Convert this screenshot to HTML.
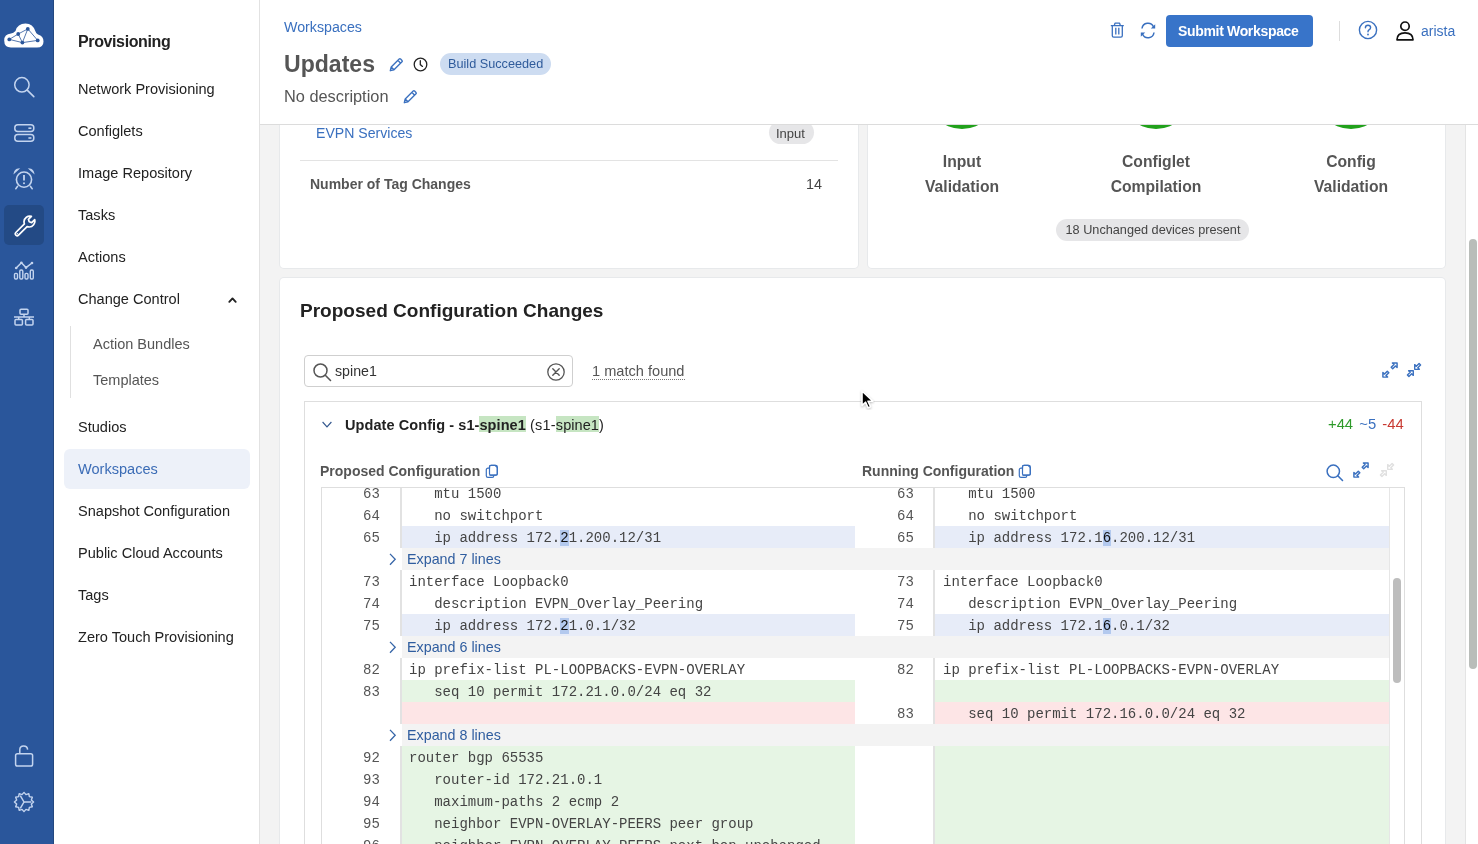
<!DOCTYPE html><html><head><meta charset="utf-8"><title>Workspaces - Updates</title><style>
*{margin:0;padding:0;box-sizing:content-box}
html,body{width:1478px;height:844px;overflow:hidden;background:#f3f3f3;font-family:'Liberation Sans', sans-serif}
.t{position:absolute;white-space:nowrap;will-change:transform}
.r{position:absolute;display:block}
.hl{background:linear-gradient(#c6e5c2,#c6e5c2) 0 0/100% calc(100% - 1px) no-repeat;padding-top:1px}
</style></head><body><div class="r" style="left:0px;top:0px;width:1478px;height:844px;background:#f3f3f3;"></div>
<div class="r" style="left:280px;top:40px;width:578px;height:228px;background:#fff;border-radius:4px;box-shadow:0 0 0 1px rgba(20,50,90,0.05);"></div>
<div class="r" style="left:868px;top:40px;width:577px;height:228px;background:#fff;border-radius:4px;box-shadow:0 0 0 1px rgba(20,50,90,0.05);"></div>
<div class="r" style="left:280px;top:278px;width:1165px;height:700px;background:#fff;border-radius:4px;box-shadow:0 0 0 1px rgba(20,50,90,0.05);"></div>
<div class="t" style="left:316.00px;top:126.46px;font-size:14.1px;line-height:14.1px;color:#3a70bf;font-weight:400;font-family:'Liberation Sans', sans-serif;">EVPN Services</div>
<div class="r" style="left:769px;top:121px;width:45px;height:23px;background:#e6e6e8;border-radius:12px;"></div>
<div class="t" style="left:776.00px;top:126.50px;font-size:13px;line-height:13px;color:#444;font-weight:400;font-family:'Liberation Sans', sans-serif;">Input</div>
<div class="r" style="left:300px;top:160px;width:538px;height:1px;background:#e3e3e3;"></div>
<div class="t" style="left:310.00px;top:176.85px;font-size:14px;line-height:14px;color:#555;font-weight:700;font-family:'Liberation Sans', sans-serif;">Number of Tag Changes</div>
<div class="t" style="right:655.50px;top:176.81px;font-size:14.4px;line-height:14.4px;color:#444;font-weight:400;font-family:'Liberation Sans', sans-serif;">14</div>
<div class="r" style="left:926px;top:57px;width:72px;height:72px;border-radius:50%;background:#21a11b;"></div>
<div class="r" style="left:1120px;top:57px;width:72px;height:72px;border-radius:50%;background:#21a11b;"></div>
<div class="r" style="left:1315px;top:57px;width:72px;height:72px;border-radius:50%;background:#21a11b;"></div>
<div class="t" style="left:662.00px;width:600px;text-align:center;top:153.71px;font-size:15.7px;line-height:15.7px;color:#555;font-weight:700;font-family:'Liberation Sans', sans-serif;">Input</div>
<div class="t" style="left:662.00px;width:600px;text-align:center;top:178.71px;font-size:15.7px;line-height:15.7px;color:#555;font-weight:700;font-family:'Liberation Sans', sans-serif;">Validation</div>
<div class="t" style="left:856.00px;width:600px;text-align:center;top:153.71px;font-size:15.7px;line-height:15.7px;color:#555;font-weight:700;font-family:'Liberation Sans', sans-serif;">Configlet</div>
<div class="t" style="left:856.00px;width:600px;text-align:center;top:178.71px;font-size:15.7px;line-height:15.7px;color:#555;font-weight:700;font-family:'Liberation Sans', sans-serif;">Compilation</div>
<div class="t" style="left:1051.00px;width:600px;text-align:center;top:153.71px;font-size:15.7px;line-height:15.7px;color:#555;font-weight:700;font-family:'Liberation Sans', sans-serif;">Config</div>
<div class="t" style="left:1051.00px;width:600px;text-align:center;top:178.71px;font-size:15.7px;line-height:15.7px;color:#555;font-weight:700;font-family:'Liberation Sans', sans-serif;">Validation</div>
<div class="r" style="left:1056px;top:219px;width:193px;height:22px;background:#e6e6e8;border-radius:11px;"></div>
<div class="t" style="left:852.50px;width:600px;text-align:center;top:223.75px;font-size:12.7px;line-height:12.7px;color:#444;font-weight:400;font-family:'Liberation Sans', sans-serif;">18 Unchanged devices present</div>
<div class="t" style="left:300.00px;top:301.07px;font-size:19.05px;line-height:19.05px;color:#222;font-weight:700;font-family:'Liberation Sans', sans-serif;">Proposed Configuration Changes</div>
<div class="r" style="left:304px;top:355px;width:267px;height:30px;background:#fff;border:1px solid #cfcfcf;border-radius:4px;"></div>
<svg class="r" style="left:312px;top:362px;" width="20" height="20" viewBox="0 0 20 20"><circle cx="8.5" cy="8.5" r="6.5" fill="none" stroke="#555" stroke-width="1.5"/><line x1="13.3" y1="13.3" x2="18.5" y2="18.5" stroke="#555" stroke-width="1.6" stroke-linecap="round"/></svg>
<div class="t" style="left:334.50px;top:363.98px;font-size:14.2px;line-height:14.2px;color:#333;font-weight:400;font-family:'Liberation Sans', sans-serif;">spine1</div>
<svg class="r" style="left:546px;top:362px;" width="20" height="20" viewBox="0 0 20 20"><circle cx="10" cy="10" r="8.2" fill="none" stroke="#555" stroke-width="1.3"/><path d="M6.8 6.8 L13.2 13.2 M13.2 6.8 L6.8 13.2" stroke="#555" stroke-width="1.4" stroke-linecap="round"/></svg>
<div class="t" style="left:592.00px;top:363.64px;font-size:14.6px;line-height:14.6px;color:#555;font-weight:400;font-family:'Liberation Sans', sans-serif;">1 match found</div>
<div class="r" style="left:592px;top:379px;width:93px;height:0;border-top:1px dotted #777;"></div>
<svg class="r" style="left:1382px;top:362px;" width="16" height="16" viewBox="0 0 16 16"><path d="M10.4 0.9 H15.1 V5.6 L13.5 4 L10.7 6.8 L9.2 5.3 L12 2.5 Z M5.6 15.1 H0.9 V10.4 L2.5 12 L5.3 9.2 L6.8 10.7 L4 13.5 Z" fill="none" stroke="#3a70bf" stroke-width="1.45" stroke-linejoin="round"/></svg>
<svg class="r" style="left:1406px;top:362px;" width="16" height="16" viewBox="0 0 16 16"><path d="M8.7 2.6 V7.3 H13.4 L11.8 5.7 L14.6 2.9 L13.1 1.4 L10.3 4.2 Z M7.3 13.4 V8.7 H2.6 L4.2 10.3 L1.4 13.1 L2.9 14.6 L5.7 11.8 Z" fill="none" stroke="#3a70bf" stroke-width="1.35" stroke-linejoin="round"/></svg>
<div class="r" style="left:304px;top:401px;width:1116px;height:600px;background:#fff;border:1px solid #dedede;"></div>
<svg class="r" style="left:321px;top:420px;" width="12" height="10" viewBox="0 0 12 10"><path d="M1.6 2 L6 6.8 L10.4 2" fill="none" stroke="#34588f" stroke-width="1.15"/></svg>
<div class="t" style="left:344.5px;top:417.93px;font-size:14.5px;line-height:14.5px;color:#222;font-family:'Liberation Sans', sans-serif;white-space:pre;"><b style="letter-spacing:0.08px">Update Config - s1-<span class="hl">spine1</span></b><span style="letter-spacing:0.2px"> (s1-</span><span class="hl" style="letter-spacing:0.05px">spine1</span>)</div>
<div class="t" style="right:74px;top:417.33px;font-size:14.8px;line-height:14.5px;font-family:'Liberation Sans', sans-serif;white-space:pre;word-spacing:2px"><span style="color:#2e9a2a">+44</span> <span style="color:#3a70bf">~5</span> <span style="color:#c83a32">-44</span></div>
<div class="t" style="left:319.60px;top:464.45px;font-size:14px;line-height:14px;color:#555;font-weight:700;font-family:'Liberation Sans', sans-serif;">Proposed Configuration</div>
<div class="t" style="left:861.60px;top:464.45px;font-size:14px;line-height:14px;color:#555;font-weight:700;font-family:'Liberation Sans', sans-serif;">Running Configuration</div>
<svg class="r" style="left:485px;top:464px;" width="14" height="14" viewBox="0 0 14 14"><path d="M4.5 4.5 V2.8 Q4.5 1.3 6 1.3 H10 L12.3 3.6 V9.7 Q12.3 11.2 10.8 11.2 H9" fill="none" stroke="#3a70bf" stroke-width="1.2"/><path d="M4.5 11.2 Q4.5 11.2 6 11.2 H9" fill="none" stroke="#3a70bf" stroke-width="1.2"/><rect x="4.5" y="1.3" width="7.8" height="9.9" rx="1.5" fill="none" stroke="#3a70bf" stroke-width="1.2"/><path d="M4.5 4.2 H3 Q1.3 4.2 1.3 5.8 V11.8 Q1.3 13.4 3 13.4 H7.3 Q8.8 13.4 8.8 11.8 V11.2" fill="none" stroke="#3a70bf" stroke-width="1.2"/></svg>
<svg class="r" style="left:1018px;top:464px;" width="14" height="14" viewBox="0 0 14 14"><path d="M4.5 4.5 V2.8 Q4.5 1.3 6 1.3 H10 L12.3 3.6 V9.7 Q12.3 11.2 10.8 11.2 H9" fill="none" stroke="#3a70bf" stroke-width="1.2"/><path d="M4.5 11.2 Q4.5 11.2 6 11.2 H9" fill="none" stroke="#3a70bf" stroke-width="1.2"/><rect x="4.5" y="1.3" width="7.8" height="9.9" rx="1.5" fill="none" stroke="#3a70bf" stroke-width="1.2"/><path d="M4.5 4.2 H3 Q1.3 4.2 1.3 5.8 V11.8 Q1.3 13.4 3 13.4 H7.3 Q8.8 13.4 8.8 11.8 V11.2" fill="none" stroke="#3a70bf" stroke-width="1.2"/></svg>
<svg class="r" style="left:1326px;top:464px;" width="18" height="18" viewBox="0 0 18 18"><circle cx="7.3" cy="7.3" r="6.2" fill="none" stroke="#3a70bf" stroke-width="1.5"/><line x1="11.8" y1="11.8" x2="16.5" y2="16.5" stroke="#3a70bf" stroke-width="1.6" stroke-linecap="round"/></svg>
<svg class="r" style="left:1353px;top:462px;" width="16" height="16" viewBox="0 0 16 16"><path d="M10.4 0.9 H15.1 V5.6 L13.5 4 L10.7 6.8 L9.2 5.3 L12 2.5 Z M5.6 15.1 H0.9 V10.4 L2.5 12 L5.3 9.2 L6.8 10.7 L4 13.5 Z" fill="none" stroke="#3a70bf" stroke-width="1.45" stroke-linejoin="round"/></svg>
<svg class="r" style="left:1379px;top:462px;" width="16" height="16" viewBox="0 0 16 16"><path d="M8.7 2.6 V7.3 H13.4 L11.8 5.7 L14.6 2.9 L13.1 1.4 L10.3 4.2 Z M7.3 13.4 V8.7 H2.6 L4.2 10.3 L1.4 13.1 L2.9 14.6 L5.7 11.8 Z" fill="none" stroke="#e0e0e0" stroke-width="1.35" stroke-linejoin="round"/></svg>
<div class="r" style="left:321px;top:487px;width:1082px;height:357px;border:1px solid #dedede;border-bottom:none;overflow:hidden;background:#fff;">
<div class="r" style="left:80px;top:-6px;width:453px;height:22px;background:#fff"></div>
<div class="r" style="left:78px;top:-6px;width:2px;height:22px;background:#e2e2e2"></div>
<div class="r" style="left:613px;top:-6px;width:454px;height:22px;background:#fff"></div>
<div class="r" style="left:611px;top:-6px;width:2px;height:22px;background:#e2e2e2"></div>
<div class="t" style="right:1024px;top:-0.85px;font-size:14px;line-height:14px;color:#555;font-family:'Liberation Mono', monospace">63</div>
<div class="t" style="left:87px;top:-0.85px;font-size:14px;line-height:14px;color:#444;font-family:'Liberation Mono', monospace;white-space:pre">   mtu 1500</div>
<div class="t" style="right:490px;top:-0.85px;font-size:14px;line-height:14px;color:#555;font-family:'Liberation Mono', monospace">63</div>
<div class="t" style="left:621px;top:-0.85px;font-size:14px;line-height:14px;color:#444;font-family:'Liberation Mono', monospace;white-space:pre">   mtu 1500</div>
<div class="r" style="left:80px;top:16px;width:453px;height:22px;background:#fff"></div>
<div class="r" style="left:78px;top:16px;width:2px;height:22px;background:#e2e2e2"></div>
<div class="r" style="left:613px;top:16px;width:454px;height:22px;background:#fff"></div>
<div class="r" style="left:611px;top:16px;width:2px;height:22px;background:#e2e2e2"></div>
<div class="t" style="right:1024px;top:21.15px;font-size:14px;line-height:14px;color:#555;font-family:'Liberation Mono', monospace">64</div>
<div class="t" style="left:87px;top:21.15px;font-size:14px;line-height:14px;color:#444;font-family:'Liberation Mono', monospace;white-space:pre">   no switchport</div>
<div class="t" style="right:490px;top:21.15px;font-size:14px;line-height:14px;color:#555;font-family:'Liberation Mono', monospace">64</div>
<div class="t" style="left:621px;top:21.15px;font-size:14px;line-height:14px;color:#444;font-family:'Liberation Mono', monospace;white-space:pre">   no switchport</div>
<div class="r" style="left:80px;top:38px;width:453px;height:22px;background:#e7ecf8"></div>
<div class="r" style="left:78px;top:38px;width:2px;height:22px;background:#e2e2e2"></div>
<div class="r" style="left:613px;top:38px;width:454px;height:22px;background:#e7ecf8"></div>
<div class="r" style="left:611px;top:38px;width:2px;height:22px;background:#e2e2e2"></div>
<div class="t" style="right:1024px;top:43.15px;font-size:14px;line-height:14px;color:#555;font-family:'Liberation Mono', monospace">65</div>
<div class="t" style="left:87px;top:43.15px;font-size:14px;line-height:14px;color:#444;font-family:'Liberation Mono', monospace;white-space:pre">   ip address 172.<span style="background:#b3c9ee;color:#111">2</span>1.200.12/31</div>
<div class="t" style="right:490px;top:43.15px;font-size:14px;line-height:14px;color:#555;font-family:'Liberation Mono', monospace">65</div>
<div class="t" style="left:621px;top:43.15px;font-size:14px;line-height:14px;color:#444;font-family:'Liberation Mono', monospace;white-space:pre">   ip address 172.1<span style="background:#b3c9ee;color:#111">6</span>.200.12/31</div>
<div class="r" style="left:80px;top:60px;width:453px;height:22px;background:#f3f3f3"></div>
<div class="r" style="left:533px;top:60px;width:534px;height:22px;background:#f3f3f3"></div>
<svg class="r" style="left:66px;top:65px" width="9" height="13" viewBox="0 0 9 13"><path d="M2 0.9 L7.2 6.3 L2 11.7" fill="none" stroke="#3766a8" stroke-width="1.3"/></svg>
<div class="t" style="left:84.9px;top:64.35px;font-size:14.3px;line-height:14.3px;color:#2f5d9f;font-family:'Liberation Sans', sans-serif">Expand 7 lines</div>
<div class="r" style="left:80px;top:82px;width:453px;height:22px;background:#fff"></div>
<div class="r" style="left:78px;top:82px;width:2px;height:22px;background:#e2e2e2"></div>
<div class="r" style="left:613px;top:82px;width:454px;height:22px;background:#fff"></div>
<div class="r" style="left:611px;top:82px;width:2px;height:22px;background:#e2e2e2"></div>
<div class="t" style="right:1024px;top:87.15px;font-size:14px;line-height:14px;color:#555;font-family:'Liberation Mono', monospace">73</div>
<div class="t" style="left:87px;top:87.15px;font-size:14px;line-height:14px;color:#444;font-family:'Liberation Mono', monospace;white-space:pre">interface Loopback0</div>
<div class="t" style="right:490px;top:87.15px;font-size:14px;line-height:14px;color:#555;font-family:'Liberation Mono', monospace">73</div>
<div class="t" style="left:621px;top:87.15px;font-size:14px;line-height:14px;color:#444;font-family:'Liberation Mono', monospace;white-space:pre">interface Loopback0</div>
<div class="r" style="left:80px;top:104px;width:453px;height:22px;background:#fff"></div>
<div class="r" style="left:78px;top:104px;width:2px;height:22px;background:#e2e2e2"></div>
<div class="r" style="left:613px;top:104px;width:454px;height:22px;background:#fff"></div>
<div class="r" style="left:611px;top:104px;width:2px;height:22px;background:#e2e2e2"></div>
<div class="t" style="right:1024px;top:109.15px;font-size:14px;line-height:14px;color:#555;font-family:'Liberation Mono', monospace">74</div>
<div class="t" style="left:87px;top:109.15px;font-size:14px;line-height:14px;color:#444;font-family:'Liberation Mono', monospace;white-space:pre">   description EVPN_Overlay_Peering</div>
<div class="t" style="right:490px;top:109.15px;font-size:14px;line-height:14px;color:#555;font-family:'Liberation Mono', monospace">74</div>
<div class="t" style="left:621px;top:109.15px;font-size:14px;line-height:14px;color:#444;font-family:'Liberation Mono', monospace;white-space:pre">   description EVPN_Overlay_Peering</div>
<div class="r" style="left:80px;top:126px;width:453px;height:22px;background:#e7ecf8"></div>
<div class="r" style="left:78px;top:126px;width:2px;height:22px;background:#e2e2e2"></div>
<div class="r" style="left:613px;top:126px;width:454px;height:22px;background:#e7ecf8"></div>
<div class="r" style="left:611px;top:126px;width:2px;height:22px;background:#e2e2e2"></div>
<div class="t" style="right:1024px;top:131.15px;font-size:14px;line-height:14px;color:#555;font-family:'Liberation Mono', monospace">75</div>
<div class="t" style="left:87px;top:131.15px;font-size:14px;line-height:14px;color:#444;font-family:'Liberation Mono', monospace;white-space:pre">   ip address 172.<span style="background:#b3c9ee;color:#111">2</span>1.0.1/32</div>
<div class="t" style="right:490px;top:131.15px;font-size:14px;line-height:14px;color:#555;font-family:'Liberation Mono', monospace">75</div>
<div class="t" style="left:621px;top:131.15px;font-size:14px;line-height:14px;color:#444;font-family:'Liberation Mono', monospace;white-space:pre">   ip address 172.1<span style="background:#b3c9ee;color:#111">6</span>.0.1/32</div>
<div class="r" style="left:80px;top:148px;width:453px;height:22px;background:#f3f3f3"></div>
<div class="r" style="left:533px;top:148px;width:534px;height:22px;background:#f3f3f3"></div>
<svg class="r" style="left:66px;top:153px" width="9" height="13" viewBox="0 0 9 13"><path d="M2 0.9 L7.2 6.3 L2 11.7" fill="none" stroke="#3766a8" stroke-width="1.3"/></svg>
<div class="t" style="left:84.9px;top:152.35px;font-size:14.3px;line-height:14.3px;color:#2f5d9f;font-family:'Liberation Sans', sans-serif">Expand 6 lines</div>
<div class="r" style="left:80px;top:170px;width:453px;height:22px;background:#fff"></div>
<div class="r" style="left:78px;top:170px;width:2px;height:22px;background:#e2e2e2"></div>
<div class="r" style="left:613px;top:170px;width:454px;height:22px;background:#fff"></div>
<div class="r" style="left:611px;top:170px;width:2px;height:22px;background:#e2e2e2"></div>
<div class="t" style="right:1024px;top:175.15px;font-size:14px;line-height:14px;color:#555;font-family:'Liberation Mono', monospace">82</div>
<div class="t" style="left:87px;top:175.15px;font-size:14px;line-height:14px;color:#444;font-family:'Liberation Mono', monospace;white-space:pre">ip prefix-list PL-LOOPBACKS-EVPN-OVERLAY</div>
<div class="t" style="right:490px;top:175.15px;font-size:14px;line-height:14px;color:#555;font-family:'Liberation Mono', monospace">82</div>
<div class="t" style="left:621px;top:175.15px;font-size:14px;line-height:14px;color:#444;font-family:'Liberation Mono', monospace;white-space:pre">ip prefix-list PL-LOOPBACKS-EVPN-OVERLAY</div>
<div class="r" style="left:80px;top:192px;width:453px;height:22px;background:#e6f5e4"></div>
<div class="r" style="left:78px;top:192px;width:2px;height:22px;background:#e2e2e2"></div>
<div class="r" style="left:613px;top:192px;width:454px;height:22px;background:#e6f5e4"></div>
<div class="r" style="left:611px;top:192px;width:2px;height:22px;background:#e2e2e2"></div>
<div class="t" style="right:1024px;top:197.15px;font-size:14px;line-height:14px;color:#555;font-family:'Liberation Mono', monospace">83</div>
<div class="t" style="left:87px;top:197.15px;font-size:14px;line-height:14px;color:#444;font-family:'Liberation Mono', monospace;white-space:pre">   seq 10 permit 172.21.0.0/24 eq 32</div>
<div class="r" style="left:80px;top:214px;width:453px;height:22px;background:#fde5e6"></div>
<div class="r" style="left:78px;top:214px;width:2px;height:22px;background:#e2e2e2"></div>
<div class="r" style="left:613px;top:214px;width:454px;height:22px;background:#fde5e6"></div>
<div class="r" style="left:611px;top:214px;width:2px;height:22px;background:#e2e2e2"></div>
<div class="t" style="right:490px;top:219.15px;font-size:14px;line-height:14px;color:#555;font-family:'Liberation Mono', monospace">83</div>
<div class="t" style="left:621px;top:219.15px;font-size:14px;line-height:14px;color:#444;font-family:'Liberation Mono', monospace;white-space:pre">   seq 10 permit 172.16.0.0/24 eq 32</div>
<div class="r" style="left:80px;top:236px;width:453px;height:22px;background:#f3f3f3"></div>
<div class="r" style="left:533px;top:236px;width:534px;height:22px;background:#f3f3f3"></div>
<svg class="r" style="left:66px;top:241px" width="9" height="13" viewBox="0 0 9 13"><path d="M2 0.9 L7.2 6.3 L2 11.7" fill="none" stroke="#3766a8" stroke-width="1.3"/></svg>
<div class="t" style="left:84.9px;top:240.35px;font-size:14.3px;line-height:14.3px;color:#2f5d9f;font-family:'Liberation Sans', sans-serif">Expand 8 lines</div>
<div class="r" style="left:80px;top:258px;width:453px;height:22px;background:#e6f5e4"></div>
<div class="r" style="left:78px;top:258px;width:2px;height:22px;background:#e2e2e2"></div>
<div class="r" style="left:613px;top:258px;width:454px;height:22px;background:#e6f5e4"></div>
<div class="r" style="left:611px;top:258px;width:2px;height:22px;background:#e2e2e2"></div>
<div class="t" style="right:1024px;top:263.15px;font-size:14px;line-height:14px;color:#555;font-family:'Liberation Mono', monospace">92</div>
<div class="t" style="left:87px;top:263.15px;font-size:14px;line-height:14px;color:#444;font-family:'Liberation Mono', monospace;white-space:pre">router bgp 65535</div>
<div class="r" style="left:80px;top:280px;width:453px;height:22px;background:#e6f5e4"></div>
<div class="r" style="left:78px;top:280px;width:2px;height:22px;background:#e2e2e2"></div>
<div class="r" style="left:613px;top:280px;width:454px;height:22px;background:#e6f5e4"></div>
<div class="r" style="left:611px;top:280px;width:2px;height:22px;background:#e2e2e2"></div>
<div class="t" style="right:1024px;top:285.15px;font-size:14px;line-height:14px;color:#555;font-family:'Liberation Mono', monospace">93</div>
<div class="t" style="left:87px;top:285.15px;font-size:14px;line-height:14px;color:#444;font-family:'Liberation Mono', monospace;white-space:pre">   router-id 172.21.0.1</div>
<div class="r" style="left:80px;top:302px;width:453px;height:22px;background:#e6f5e4"></div>
<div class="r" style="left:78px;top:302px;width:2px;height:22px;background:#e2e2e2"></div>
<div class="r" style="left:613px;top:302px;width:454px;height:22px;background:#e6f5e4"></div>
<div class="r" style="left:611px;top:302px;width:2px;height:22px;background:#e2e2e2"></div>
<div class="t" style="right:1024px;top:307.15px;font-size:14px;line-height:14px;color:#555;font-family:'Liberation Mono', monospace">94</div>
<div class="t" style="left:87px;top:307.15px;font-size:14px;line-height:14px;color:#444;font-family:'Liberation Mono', monospace;white-space:pre">   maximum-paths 2 ecmp 2</div>
<div class="r" style="left:80px;top:324px;width:453px;height:22px;background:#e6f5e4"></div>
<div class="r" style="left:78px;top:324px;width:2px;height:22px;background:#e2e2e2"></div>
<div class="r" style="left:613px;top:324px;width:454px;height:22px;background:#e6f5e4"></div>
<div class="r" style="left:611px;top:324px;width:2px;height:22px;background:#e2e2e2"></div>
<div class="t" style="right:1024px;top:329.15px;font-size:14px;line-height:14px;color:#555;font-family:'Liberation Mono', monospace">95</div>
<div class="t" style="left:87px;top:329.15px;font-size:14px;line-height:14px;color:#444;font-family:'Liberation Mono', monospace;white-space:pre">   neighbor EVPN-OVERLAY-PEERS peer group</div>
<div class="r" style="left:80px;top:346px;width:453px;height:22px;background:#e6f5e4"></div>
<div class="r" style="left:78px;top:346px;width:2px;height:22px;background:#e2e2e2"></div>
<div class="r" style="left:613px;top:346px;width:454px;height:22px;background:#e6f5e4"></div>
<div class="r" style="left:611px;top:346px;width:2px;height:22px;background:#e2e2e2"></div>
<div class="t" style="right:1024px;top:351.15px;font-size:14px;line-height:14px;color:#555;font-family:'Liberation Mono', monospace">96</div>
<div class="t" style="left:87px;top:351.15px;font-size:14px;line-height:14px;color:#444;font-family:'Liberation Mono', monospace;white-space:pre">   neighbor EVPN-OVERLAY-PEERS next-hop-unchanged</div>
<div class="r" style="left:1067px;top:0;width:1px;height:400px;background:#e6e6e6"></div>
<div class="r" style="left:1071px;top:90px;width:8px;height:105px;border-radius:4px;background:#bdbdbd"></div>
</div>
<svg class="r" style="left:859px;top:388px;" width="16" height="22" viewBox="0 0 16 22"><path d="M3 3 L3 17.6 L6.5 14.2 L9.1 19.8 L11.6 18.7 L9 13.2 L13.9 13.2 Z" fill="#000" stroke="#fff" stroke-width="1.6" stroke-linejoin="round" style="filter:drop-shadow(0 1px 1px rgba(0,0,0,.25))"/></svg>
<div class="r" style="left:260px;top:0px;width:1218px;height:124px;background:#fff;"></div>
<div class="r" style="left:260px;top:124px;width:1218px;height:1px;background:#dcdcdc;"></div>
<div class="t" style="left:284.00px;top:19.65px;font-size:14.23px;line-height:14.23px;color:#3a70bf;font-weight:400;font-family:'Liberation Sans', sans-serif;">Workspaces</div>
<div class="t" style="left:283.50px;top:52.97px;font-size:23.07px;line-height:23.07px;color:#555;font-weight:700;font-family:'Liberation Sans', sans-serif;">Updates</div>
<svg class="r" style="left:389px;top:57px;" width="15" height="15" viewBox="0 0 15 15"><path d="M10.2 2.0 Q10.9 1.3 11.6 2.0 L13.0 3.4 Q13.7 4.1 13.0 4.8 L5.0 12.8 L1.3 13.7 L2.2 10.0 Z M8.85 3.35 L11.65 6.15 M2.2 10.0 L5.0 12.8" fill="none" stroke="#3a70bf" stroke-width="1.35" stroke-linejoin="round"/></svg>
<svg class="r" style="left:412.5px;top:56.5px;" width="15" height="15" viewBox="0 0 15 15"><circle cx="7.5" cy="7.5" r="6.3" fill="none" stroke="#222" stroke-width="1.3"/><path d="M7.3 3.7 V7.6 L9.5 9.4" fill="none" stroke="#222" stroke-width="1.3" stroke-linecap="round"/></svg>
<div class="r" style="left:440px;top:53px;width:111px;height:22px;background:#cddcf1;border-radius:11px;"></div>
<div class="t" style="left:448.00px;top:57.75px;font-size:12.7px;line-height:12.7px;color:#2f5b9b;font-weight:400;font-family:'Liberation Sans', sans-serif;">Build Succeeded</div>
<div class="t" style="left:284.00px;top:88.16px;font-size:16.35px;line-height:16.35px;color:#555;font-weight:400;font-family:'Liberation Sans', sans-serif;">No description</div>
<svg class="r" style="left:403px;top:89px;" width="15" height="15" viewBox="0 0 15 15"><path d="M10.2 2.0 Q10.9 1.3 11.6 2.0 L13.0 3.4 Q13.7 4.1 13.0 4.8 L5.0 12.8 L1.3 13.7 L2.2 10.0 Z M8.85 3.35 L11.65 6.15 M2.2 10.0 L5.0 12.8" fill="none" stroke="#3a70bf" stroke-width="1.35" stroke-linejoin="round"/></svg>
<svg class="r" style="left:1109.5px;top:21.6px;" width="15" height="17" viewBox="0 0 15 17"><path d="M0.8 3.6 H13.8 M4.2 3.6 L5 1.2 H9.6 L10.4 3.6 M2.3 4 V13.8 Q2.3 15.2 3.7 15.2 H10.9 Q12.3 15.2 12.3 13.8 V4 M5.8 5.8 V12.6 M8.8 5.8 V12.6" fill="none" stroke="#3a70bf" stroke-width="1.3" stroke-linejoin="round"/></svg>
<svg class="r" style="left:1139px;top:22px;" width="18" height="17" viewBox="0 0 18 17"><path d="M3 6.5 A6 6 0 0 1 14.5 5" fill="none" stroke="#3a70bf" stroke-width="1.5"/><path d="M15 10.5 A6 6 0 0 1 3.5 12" fill="none" stroke="#3a70bf" stroke-width="1.5"/><path d="M16.2 2.2 V6.6 H11.8 Z" fill="#3a70bf"/><path d="M1.8 14.8 V10.4 H6.2 Z" fill="#3a70bf"/></svg>
<div class="r" style="left:1166px;top:15px;width:147px;height:32px;background:#3874c9;border-radius:4px;"></div>
<div class="t" style="left:1178.00px;top:24.45px;font-size:14px;line-height:14px;color:#fff;font-weight:700;font-family:'Liberation Sans', sans-serif;letter-spacing:-0.33px;">Submit Workspace</div>
<div class="r" style="left:1339px;top:21px;width:1px;height:20px;background:#dddddd;"></div>
<svg class="r" style="left:1358px;top:20px;" width="20" height="20" viewBox="0 0 20 20"><circle cx="10" cy="10" r="8.6" fill="none" stroke="#3a70bf" stroke-width="1.4"/><path d="M7.4 7.8 Q7.4 5.3 10 5.3 Q12.6 5.3 12.6 7.6 Q12.6 9 11 9.9 Q10 10.5 10 11.8" fill="none" stroke="#3a70bf" stroke-width="1.4" stroke-linecap="round"/><circle cx="10" cy="14.5" r="0.9" fill="#3a70bf"/></svg>
<svg class="r" style="left:1395px;top:20px;" width="20" height="22" viewBox="0 0 20 22"><circle cx="10" cy="6.2" r="4.2" fill="none" stroke="#111" stroke-width="1.7"/><path d="M2 19.8 Q2 12.8 10 12.8 Q18 12.8 18 19.8 Z" fill="none" stroke="#111" stroke-width="1.7" stroke-linejoin="round"/></svg>
<div class="t" style="left:1420.50px;top:24.15px;font-size:14px;line-height:14px;color:#3a70bf;font-weight:400;font-family:'Liberation Sans', sans-serif;">arista</div>
<div class="r" style="left:1465px;top:125px;width:13px;height:719px;background:#fff;border-left:1px solid #e4e4e4;"></div>
<div class="r" style="left:1469px;top:239px;width:8px;height:430px;background:#b9bdb9;border-radius:4px;"></div>
<div class="r" style="left:54px;top:0px;width:205px;height:844px;background:#fff;"></div>
<div class="r" style="left:259px;top:0px;width:1px;height:844px;background:#e2e2e2;"></div>
<div class="t" style="left:77.80px;top:34.26px;font-size:16px;line-height:16px;color:#222;font-weight:700;font-family:'Liberation Sans', sans-serif;letter-spacing:-0.38px;">Provisioning</div>
<div class="t" style="left:78.00px;top:81.88px;font-size:14.55px;line-height:14.55px;color:#222;font-weight:400;font-family:'Liberation Sans', sans-serif;">Network Provisioning</div>
<div class="t" style="left:78.00px;top:123.88px;font-size:14.55px;line-height:14.55px;color:#222;font-weight:400;font-family:'Liberation Sans', sans-serif;">Configlets</div>
<div class="t" style="left:78.00px;top:165.88px;font-size:14.55px;line-height:14.55px;color:#222;font-weight:400;font-family:'Liberation Sans', sans-serif;">Image Repository</div>
<div class="t" style="left:78.00px;top:207.88px;font-size:14.55px;line-height:14.55px;color:#222;font-weight:400;font-family:'Liberation Sans', sans-serif;">Tasks</div>
<div class="t" style="left:78.00px;top:249.88px;font-size:14.55px;line-height:14.55px;color:#222;font-weight:400;font-family:'Liberation Sans', sans-serif;">Actions</div>
<div class="t" style="left:78.00px;top:291.88px;font-size:14.55px;line-height:14.55px;color:#222;font-weight:400;font-family:'Liberation Sans', sans-serif;">Change Control</div>
<svg class="r" style="left:226px;top:294px;" width="13" height="10" viewBox="0 0 13 10"><path d="M3.3 7.8 L6.5 4.4 L9.7 7.8" fill="none" stroke="#222" stroke-width="1.9" stroke-linecap="round" stroke-linejoin="round"/></svg>
<div class="r" style="left:70px;top:326px;width:1px;height:72px;background:#e0e0e0;"></div>
<div class="t" style="left:93.00px;top:336.73px;font-size:14.5px;line-height:14.5px;color:#555;font-weight:400;font-family:'Liberation Sans', sans-serif;">Action Bundles</div>
<div class="t" style="left:93.00px;top:372.93px;font-size:14.5px;line-height:14.5px;color:#555;font-weight:400;font-family:'Liberation Sans', sans-serif;">Templates</div>
<div class="t" style="left:78.00px;top:419.68px;font-size:14.55px;line-height:14.55px;color:#222;font-weight:400;font-family:'Liberation Sans', sans-serif;">Studios</div>
<div class="r" style="left:64px;top:449px;width:186px;height:40px;background:#edf1f9;border-radius:6px;"></div>
<div class="t" style="left:78.00px;top:462.08px;font-size:14.55px;line-height:14.55px;color:#3b6cb6;font-weight:400;font-family:'Liberation Sans', sans-serif;">Workspaces</div>
<div class="t" style="left:78.00px;top:503.58px;font-size:14.55px;line-height:14.55px;color:#222;font-weight:400;font-family:'Liberation Sans', sans-serif;">Snapshot Configuration</div>
<div class="t" style="left:78.00px;top:545.58px;font-size:14.55px;line-height:14.55px;color:#222;font-weight:400;font-family:'Liberation Sans', sans-serif;">Public Cloud Accounts</div>
<div class="t" style="left:78.00px;top:587.58px;font-size:14.55px;line-height:14.55px;color:#222;font-weight:400;font-family:'Liberation Sans', sans-serif;">Tags</div>
<div class="t" style="left:78.00px;top:629.58px;font-size:14.55px;line-height:14.55px;color:#222;font-weight:400;font-family:'Liberation Sans', sans-serif;">Zero Touch Provisioning</div>
<div class="r" style="left:0px;top:0px;width:54px;height:844px;background:#2a569b;"></div>
<div class="r" style="left:53px;top:0px;width:1px;height:844px;background:#24487f;"></div>
<svg class="r" style="left:3px;top:21px;" width="42" height="28" viewBox="0 0 42 28"><path d="M8 26.5 Q1.2 26.5 1.2 19.5 Q1.2 13 8 12.5 Q10.5 12 12.5 10 Q14.5 2.5 22.5 2.5 Q30 2.5 32.5 10.5 Q33 12.5 35 13.5 Q40.5 15 40.5 20.5 Q40.5 26.5 34 26.5 Z" fill="#fff"/><g stroke="#2a569b" stroke-width="0.8" fill="none"><path d="M6.3 18.4 L15.2 13 L24.8 7.9 L19.4 21.6 L34.7 19.4 L24.8 7.9 M15.2 13 L19.4 21.6 L6.3 18.4"/></g><g fill="#2a569b"><circle cx="6.3" cy="18.4" r="1.9"/><circle cx="15.2" cy="13" r="1.9"/><circle cx="24.8" cy="7.9" r="1.9"/><circle cx="19.4" cy="21.6" r="1.9"/><circle cx="34.7" cy="19.4" r="1.9"/></g></svg>
<svg class="r" style="left:12px;top:75px;" width="24" height="24" viewBox="0 0 24 24"><circle cx="9.9" cy="9.8" r="7.2" fill="none" stroke="#c3d4ef" stroke-width="1.5"/><line x1="15.2" y1="15.1" x2="21.8" y2="21.6" stroke="#c3d4ef" stroke-width="1.6" stroke-linecap="round"/></svg>
<svg class="r" style="left:12px;top:122px;" width="24" height="22" viewBox="0 0 24 22"><rect x="2.8" y="2.8" width="19" height="6.6" rx="3" fill="none" stroke="#c3d4ef" stroke-width="1.5"/><rect x="2.8" y="12.6" width="19" height="6.6" rx="3" fill="none" stroke="#c3d4ef" stroke-width="1.5"/><rect x="16.4" y="5.4" width="3" height="1.6" fill="#c3d4ef"/><rect x="16.4" y="15.2" width="3" height="1.6" fill="#c3d4ef"/></svg>
<svg class="r" style="left:12px;top:167px;" width="24" height="24" viewBox="0 0 24 24"><circle cx="12" cy="12.6" r="7.6" fill="none" stroke="#c3d4ef" stroke-width="1.6"/><path d="M2.4 5.8 Q3.2 2.2 6.6 2 Z M21.6 5.8 Q20.8 2.2 17.4 2 Z" fill="#c3d4ef" stroke="#c3d4ef" stroke-width="1.2"/><line x1="12" y1="8" x2="12" y2="13.6" stroke="#c3d4ef" stroke-width="1.8"/><circle cx="12" cy="16.3" r="1" fill="#c3d4ef"/><path d="M5.6 19.3 L3.8 21.8 M18.4 19.3 L20.2 21.8" stroke="#c3d4ef" stroke-width="1.5" stroke-linecap="round"/></svg>
<div class="r" style="left:4px;top:205px;width:40px;height:40px;background:#234a85;border-radius:5px;"></div>
<svg class="r" style="left:12px;top:213px;" width="24" height="24" viewBox="0 0 24 24"><path d="M3.8 19.5 L12.4 10.9 Q11 6.8 14.4 4.2 Q16.6 2.6 19.4 3.3 L16.4 6.3 L17.2 8.8 L19.7 9.6 L22.7 6.6 Q23.4 9.4 21.6 11.8 Q19.2 14.9 15.1 13.6 L6.5 22.2 Q5.2 23.4 3.9 22.2 Q2.6 20.8 3.8 19.5 Z" fill="none" stroke="#fff" stroke-width="1.7" stroke-linejoin="round"/><circle cx="5.3" cy="20.8" r="0.7" fill="#fff"/></svg>
<svg class="r" style="left:12px;top:260px;" width="24" height="22" viewBox="0 0 24 22"><path d="M4.2 8 L9.4 2.8 L14 7.6 L20 3" fill="none" stroke="#c3d4ef" stroke-width="1.5" stroke-linejoin="round"/><circle cx="4.2" cy="8" r="1.3" fill="#c3d4ef"/><circle cx="9.4" cy="2.8" r="1.3" fill="#c3d4ef"/><circle cx="14" cy="7.6" r="1.3" fill="#c3d4ef"/><circle cx="20" cy="3" r="1.3" fill="#c3d4ef"/><g fill="none" stroke="#c3d4ef" stroke-width="1.4"><rect x="2.5" y="13.4" width="3" height="5.6" rx="1.2"/><rect x="7.8" y="10" width="3" height="9" rx="1.2"/><rect x="13" y="13.4" width="3" height="5.6" rx="1.2"/><rect x="18.3" y="10" width="3" height="9" rx="1.2"/></g></svg>
<svg class="r" style="left:12px;top:306px;" width="24" height="22" viewBox="0 0 24 22"><g fill="none" stroke="#c3d4ef" stroke-width="1.5"><rect x="8" y="3.3" width="8" height="5" rx="1"/><rect x="3" y="13.6" width="7.4" height="5.4" rx="1"/><rect x="13.6" y="13.6" width="7.4" height="5.4" rx="1"/><path d="M12 8.3 V11 M2 11 H22 M6.7 11 V13.6 M17.3 11 V13.6"/></g></svg>
<svg class="r" style="left:12px;top:743px;" width="24" height="26" viewBox="0 0 24 26"><g fill="none" stroke="#c3d4ef" stroke-width="1.5"><rect x="3.6" y="10.8" width="17" height="12.2" rx="1.8"/><path d="M7.8 10.8 V6.8 Q7.8 3 11.6 3 Q15.4 3 15.6 6.6"/></g></svg>
<svg class="r" style="left:12px;top:790px;" width="24" height="24" viewBox="0 0 24 24"><path d="M12.00 2.40 L13.97 4.66 L16.80 3.69 L17.37 6.63 L20.31 7.20 L19.34 10.03 L21.60 12.00 L19.34 13.97 L20.31 16.80 L17.37 17.37 L16.80 20.31 L13.97 19.34 L12.00 21.60 L10.03 19.34 L7.20 20.31 L6.63 17.37 L3.69 16.80 L4.66 13.97 L2.40 12.00 L4.66 10.03 L3.69 7.20 L6.63 6.63 L7.20 3.69 L10.03 4.66 Z" fill="none" stroke="#c3d4ef" stroke-width="1.4" stroke-linejoin="round"/><path d="M12 12 L19.40 12.00 M12 12 L8.30 18.41 M12 12 L8.30 5.59" stroke="#c3d4ef" stroke-width="1.5"/></svg></body></html>
